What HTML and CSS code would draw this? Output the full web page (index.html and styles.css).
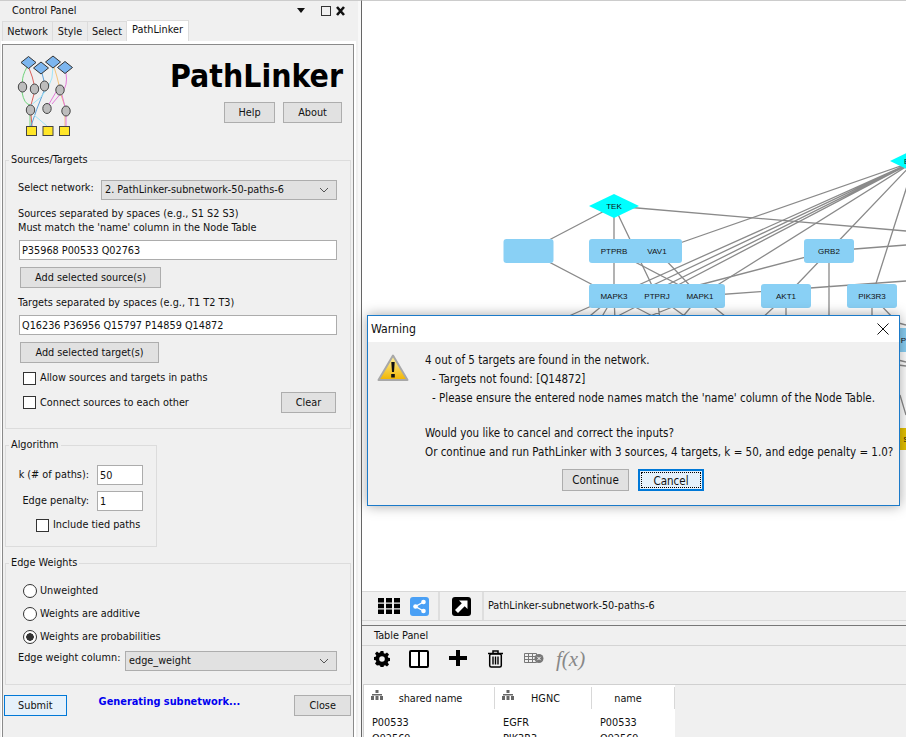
FILE: index.html
```html
<!DOCTYPE html>
<html lang="en">
<head>
<meta charset="utf-8">
<title>PathLinker</title>
<link rel="stylesheet" href="styles.css">
</head>
<body>
<aside class="control">
  <div class="panel-title">
    <span class="panel-name">Control Panel</span>
    <svg class="panel-icons" width="52" height="12" viewBox="0 0 52 12"><path d="M0 3h8L4 8z" fill="#111"/><rect x="24.500" y="1.500" width="9" height="9" fill="none" stroke="#333"/><path d="M40 2l7 8M47 2l-7 8" stroke="#111" stroke-width="2.600"/></svg>
  </div>
  <nav class="tabs">
    <span class="tab tab-network">Network</span>
    <span class="tab tab-style">Style</span>
    <span class="tab tab-select">Select</span>
    <span class="tab tab-active">PathLinker</span>
  </nav>
  <div class="tab-frame">
    <div class="tab-inner">
      <header class="pl-header">
        <svg class="pl-logo" width="60" height="90" viewBox="14 50 60 90">
          <g fill="none" stroke-width="1">
            <path d="M27 67Q22 76 22.500 82" stroke="#6fd37a"/>
            <path d="M22 92Q24 104 30 105" stroke="#6fd37a"/>
            <path d="M30 115V126" stroke="#6fd37a"/>
            <path d="M29 68Q33 78 34 84" stroke="#d9605c"/>
            <path d="M34 94L31 105M31 115L32 126" stroke="#d9605c"/>
            <path d="M42 73L44 81" stroke="#5c9fd8"/>
            <path d="M44 91Q36 110 31 126" stroke="#5c9fd8"/>
            <path d="M53 67Q54 90 30 106M34 115L47 126" stroke="#9fe4f6"/>
            <path d="M54 67Q57 76 59 85" stroke="#f5c47a"/>
            <path d="M61 95L64.500 105M65 116V126" stroke="#f5c47a"/>
            <path d="M66 73Q68 86 62 92L52 104" stroke="#e27ad8"/>
            <path d="M56 92L49 104M62 95L65 107M66 116V126" stroke="#e27ad8"/>
          </g>
          <g fill="#7db6ef" stroke="#333">
            <path d="M28.500 56.500L36 62.500L28.500 68.500L21 62.500Z"/>
            <path d="M41 62L48.500 68L41 74L33.500 68Z"/>
            <path d="M53 56L60.500 62L53 68L45.500 62Z"/>
            <path d="M65 61.500L72.500 67.500L65 73.500L57.500 67.500Z"/>
          </g>
          <g fill="#bdbdbd" stroke="#444">
            <ellipse cx="22.500" cy="87" rx="4.200" ry="5"/>
            <ellipse cx="34.500" cy="89" rx="4.200" ry="5"/>
            <ellipse cx="44.500" cy="86" rx="4.200" ry="5"/>
            <ellipse cx="60" cy="90" rx="4.200" ry="5"/>
            <ellipse cx="30.500" cy="110" rx="4.200" ry="5"/>
            <ellipse cx="47" cy="108.500" rx="4.200" ry="5"/>
            <ellipse cx="66" cy="111" rx="4.200" ry="5"/>
          </g>
          <g fill="#ffe629" stroke="#444">
            <rect x="26.500" y="126.500" width="10" height="9"/>
            <rect x="43" y="126.500" width="10" height="9"/>
            <rect x="59.500" y="126.500" width="10" height="9"/>
          </g>
        </svg>
        <div class="pl-brand">
          <h1 class="pl-title">PathLinker</h1>
          <div class="pl-actions">
            <button class="btn btn-help">Help</button>
            <button class="btn btn-about">About</button>
          </div>
        </div>
      </header>

      <fieldset class="group group-sources">
        <legend>Sources/Targets</legend>
        <div class="row-network">
          <span class="lbl-network">Select network:</span>
          <div class="combo combo-network"><span>2. PathLinker-subnetwork-50-paths-6</span><svg width="10" height="6" viewBox="0 0 10 6"><path d="M1 1l4 4 4-4" fill="none" stroke="#555"/></svg></div>
        </div>
        <p class="hint hint-sources">Sources separated by spaces (e.g., S1 S2 S3)<br>Must match the 'name' column in the Node Table</p>
        <input class="field field-wide" type="text" value="P35968 P00533 Q02763">
        <button class="btn btn-add-source">Add selected source(s)</button>
        <p class="hint hint-targets">Targets separated by spaces (e.g., T1 T2 T3)</p>
        <input class="field field-wide" type="text" value="Q16236 P36956 Q15797 P14859 Q14872">
        <button class="btn btn-add-target">Add selected target(s)</button>
        <label class="check check-allow"><input type="checkbox"><span>Allow sources and targets in paths</span></label>
        <div class="row-connect">
          <label class="check"><input type="checkbox"><span>Connect sources to each other</span></label>
          <button class="btn btn-clear">Clear</button>
        </div>
      </fieldset>

      <fieldset class="group group-algorithm">
        <legend>Algorithm</legend>
        <div class="alg-row alg-first"><span class="alg-label">k (# of paths):</span><input class="field field-small" type="text" value="50"></div>
        <div class="alg-row alg-second"><span class="alg-label">Edge penalty:</span><input class="field field-small" type="text" value="1"></div>
        <label class="check check-tied"><input type="checkbox"><span>Include tied paths</span></label>
      </fieldset>

      <fieldset class="group group-weights">
        <legend>Edge Weights</legend>
        <label class="radio radio-first"><input type="radio" name="w"><span>Unweighted</span></label>
        <label class="radio"><input type="radio" name="w"><span>Weights are additive</span></label>
        <label class="radio"><input type="radio" name="w" checked><span>Weights are probabilities</span></label>
        <div class="row-column">
          <span class="lbl-column">Edge weight column:</span>
          <div class="combo combo-column"><span>edge_weight</span><svg width="10" height="6" viewBox="0 0 10 6"><path d="M1 1l4 4 4-4" fill="none" stroke="#555"/></svg></div>
        </div>
      </fieldset>

      <div class="pl-footer">
        <button class="btn btn-submit">Submit</button>
        <span class="status">Generating subnetwork...</span>
        <button class="btn btn-close">Close</button>
      </div>
    </div>
  </div>
</aside>

<main class="workspace">
  <div class="canvas">
    <svg width="544" height="590" viewBox="362 1 544 590">
      <g stroke="#8a8a8a" stroke-width="1.300" fill="none">
        <path d="M528 251L614 206M614 206V296M614 206L657 296M614 206L906 231"/>
        <path d="M528 251L614 296M657 251L700 296M614 251L700 296"/>
        <path d="M915 161L657 251M915 161L614 296M915 161L630 296M915 161L645 296M915 161L657 296M915 161L700 296M915 161L829 251M915 161L872 296"/>
        <path d="M829 251L657 296M829 251L786 296M829 251V320M829 251L906 245M700 296L906 281"/>
        <path d="M614 296L560 320M614 296L585 320M614 296L600 320M614 296L615 320M614 296L660 320M657 296L610 320M657 296L660 320M657 296L690 320M700 296L640 320M700 296L680 320M700 296L730 320M786 296L760 320M786 296V320M872 296V320M872 296L895 320"/>
        <path d="M880 318L906 325M898 360L906 362M898 365L906 366M900 395L906 415"/>
      </g>
      <g fill="#00ffff">
        <path d="M589 206L614 194L639 206L614 218Z"/>
        <path d="M890 161L915 149L940 161L915 173Z"/>
      </g>
      <g fill="#89d0f5">
        <rect x="503.500" y="239" width="50" height="24" rx="3"/>
        <rect x="589" y="239" width="50" height="24" rx="3"/>
        <rect x="632" y="239" width="50" height="24" rx="3"/>
        <rect x="804" y="239" width="50" height="24" rx="3"/>
        <rect x="589" y="284" width="50" height="24" rx="3"/>
        <rect x="632" y="284" width="50" height="24" rx="3"/>
        <rect x="675" y="284" width="50" height="24" rx="3"/>
        <rect x="761" y="284" width="50" height="24" rx="3"/>
        <rect x="847" y="284" width="50" height="24" rx="3"/>
        <rect x="890" y="328" width="50" height="24" rx="3"/>
      </g>
      <rect x="890" y="428" width="50" height="22" rx="3" fill="#e6c200"/>
      <g class="node-text" text-anchor="middle">
        <text x="614" y="209">TEK</text>
        <text x="915" y="164">EGFR</text>
        <text x="614" y="254">PTPRB</text>
        <text x="657" y="254">VAV1</text>
        <text x="829" y="254">GRB2</text>
        <text x="614" y="299">MAPK3</text>
        <text x="657" y="299">PTPRJ</text>
        <text x="700" y="299">MAPK1</text>
        <text x="786" y="299">AKT1</text>
        <text x="872" y="299">PIK3R3</text>
        <text x="915" y="343">PIK3CA</text>
        <text x="915" y="442">SIRPA</text>
      </g>
    </svg>
  </div>

  <div class="view-bar">
    <div class="view-cell view-cell-a">
      <svg width="22" height="16" viewBox="0 0 22 16" fill="#000"><rect width="6" height="4.500"/><rect x="8" width="6" height="4.500"/><rect x="16" width="6" height="4.500"/><rect y="5.750" width="6" height="4.500"/><rect x="8" y="5.750" width="6" height="4.500"/><rect x="16" y="5.750" width="6" height="4.500"/><rect y="11.500" width="6" height="4.500"/><rect x="8" y="11.500" width="6" height="4.500"/><rect x="16" y="11.500" width="6" height="4.500"/></svg>
      <svg width="19" height="19" viewBox="0 0 19 19"><rect width="19" height="19" rx="3" fill="#4aa0f5"/><g fill="#fff"><circle cx="13.500" cy="5" r="2.300"/><circle cx="5.500" cy="9.500" r="2.300"/><circle cx="13.500" cy="14" r="2.300"/></g><path d="M13.500 5L5.500 9.500L13.500 14" stroke="#fff" stroke-width="1.400" fill="none"/></svg>
    </div>
    <div class="view-cell view-cell-b">
      <svg width="19" height="19" viewBox="0 0 19 19"><rect width="19" height="19" rx="3" fill="#000"/><path d="M7 3.500h8.500V12l-2.800-2.800L6 16l-3-3 6.800-6.700z" fill="#fff"/></svg>
    </div>
    <div class="view-name">PathLinker-subnetwork-50-paths-6</div>
  </div>

  <section class="table-panel">
    <div class="table-title">Table Panel</div>
    <div class="table-tools">
      <svg class="tool-gear" width="16" height="16" viewBox="0 0 16 16"><path fill-rule="evenodd" d="M6.600 0h2.800l.4 2.200 1.300.6L13 1.500l2 2-1.300 1.900.6 1.300 2.200.4v2.800l-2.200.4-.6 1.300 1.300 1.900-2 2-1.900-1.300-1.300.6-.4 2.200H6.600l-.4-2.200-1.300-.6L3 14.500l-2-2 1.300-1.900-.6-1.300L-.5 9 -.5 6.200l2.200-.4.6-1.300L1 2.600l2-2 1.900 1.300 1.300-.6zM8 5.200a2.800 2.800 0 1 0 0 5.600 2.800 2.800 0 0 0 0-5.600z" fill="#000"/></svg>
      <svg class="tool-columns" width="20" height="18" viewBox="0 0 20 18"><rect x="1" y="1" width="18" height="16" rx="1" fill="#fff" stroke="#000" stroke-width="2"/><path d="M10 1v16" stroke="#000" stroke-width="2"/></svg>
      <svg class="tool-plus" width="18" height="16" viewBox="0 0 18 16"><path d="M7 0h4v6h7v4h-7v6H7v-6H0V6h7z" fill="#000"/></svg>
      <svg class="tool-trash" width="17" height="18" viewBox="0 0 17 18"><path d="M1 3.500h15M6 3.500V1h5v2.500" fill="none" stroke="#000" stroke-width="1.500"/><rect x="2.700" y="4" width="11.600" height="13" rx="1.500" fill="none" stroke="#000" stroke-width="1.500"/><path d="M6 6.500v8M8.500 6.500v8M11 6.500v8" stroke="#000" stroke-width="1.400"/></svg>
      <svg class="tool-delcol" width="20" height="11" viewBox="0 0 20 11"><path d="M.5.500h12v9H.5zM.5 3.500h12M.5 6.500h12M4.500.500v9M8.500.500v9" fill="none" stroke="#777"/><circle cx="15" cy="5.500" r="4.500" fill="#777"/><path d="M13.300 3.800l3.400 3.400M16.700 3.800l-3.400 3.400" stroke="#fff"/></svg>
      <span class="tool-fx">f(x)</span>
    </div>
    <div class="table-wrap">
      <div class="table-grid">
        <div class="th th-shared"><svg width="12" height="10" viewBox="0 0 12 10"><path d="M4.500 0h3v3h-3zM0 6h3v4H0zM4.500 6h3v4h-3zM9 6h3v4H9zM1 4h10v1.500H1z" fill="#666"/></svg><span>shared name</span></div>
        <div class="th th-hgnc"><svg width="12" height="10" viewBox="0 0 12 10"><path d="M4.500 0h3v3h-3zM0 6h3v4H0zM4.500 6h3v4h-3zM9 6h3v4H9zM1 4h10v1.500H1z" fill="#666"/></svg><span>HGNC</span></div>
        <div class="th th-name"><span>name</span></div>
        <div class="td">P00533</div><div class="td">EGFR</div><div class="td">P00533</div>
        <div class="td">Q92569</div><div class="td">PIK3R3</div><div class="td">Q92569</div>
      </div>
    </div>
  </section>
</main>

<div class="dialog" role="dialog">
  <div class="dialog-title">
    <span>Warning</span>
    <svg width="12" height="12" viewBox="0 0 12 12"><path d="M.5.500l11 11M11.500.500l-11 11" stroke="#111" fill="none"/></svg>
  </div>
  <div class="dialog-body">
    <svg class="warn-icon" width="32" height="28" viewBox="0 0 32 28">
      <defs><linearGradient id="warnfill" x1="0" y1="0" x2="0" y2="1"><stop offset="0" stop-color="#fff2a0"/><stop offset="1" stop-color="#f0b400"/></linearGradient></defs>
      <path d="M16 1.500L30.500 26H1.500Z" fill="url(#warnfill)" stroke="#a8a8a8" stroke-width="2" stroke-linejoin="round"/>
      <path d="M14.300 8h3.400l-.7 10h-2zM14.200 20h3.600v3.600h-3.600z" fill="#111"/>
    </svg>
    <div class="dialog-text">
      <p>4 out of 5 targets are found in the network.</p>
      <p class="indent">- Targets not found: [Q14872]</p>
      <p class="indent">- Please ensure the entered node names match the 'name' column of the Node Table.</p>
      <p class="spaced">Would you like to cancel and correct the inputs?</p>
      <p>Or continue and run PathLinker with 3 sources, 4 targets, k = 50, and edge penalty = 1.0?</p>
    </div>
  </div>
  <div class="dialog-actions">
    <button class="btn btn-continue">Continue</button>
    <button class="btn btn-cancel"><span>Cancel</span></button>
  </div>
</div>
</body>
</html>
```
FILE: styles.css
```css
* { box-sizing: border-box; }
html, body { margin: 0; padding: 0; }
body {
  position: relative;
  width: 906px;
  height: 737px;
  overflow: hidden;
  display: flex;
  background: #f0f0f0;
  color: #111;
  font-family: "DejaVu Sans", "Noto Sans", sans-serif;
  font-stretch: condensed;
  font-size: 10.8px;
  line-height: 14px;
}
p { margin: 0; }
button, input { font: inherit; color: inherit; margin: 0; }

.control { width: 362px; flex: none; height: 737px; border-right: 1px solid #666; border-top: 1px solid #ccc; box-shadow: inset -3px 0 0 #f8f8f8; }
.panel-title { height: 19px; display: flex; align-items: center; justify-content: space-between; padding: 0 12px 0 12px; }
.tabs { height: 21px; display: flex; padding-left: 2px; align-items: flex-end; }
.tab { height: 20px; line-height: 20px; text-align: center; background: #ececec; border: 1px solid #dcdcdc; border-bottom: 0; border-left: 0; }
.tab-network { width: 51px; border-left: 1px solid #dcdcdc; }
.tab-style { width: 35px; }
.tab-select { width: 39px; }
.tab-active { width: 62px; height: 21px; line-height: 17px; background: #fff; border-color: #dcdcdc; }

.tab-frame { margin: 0 5px 0 1px; height: 696px; border-top: 3px solid #fff; border-left: 1px solid #fff; border-right: 2px solid #fff; }
.tab-inner { height: 100%; border: 1px solid #8a8a8a; border-bottom: 0; padding: 0 2px; }

.pl-header { height: 108px; display: flex; justify-content: space-between; padding-right: 9px; }
.pl-logo { margin: 5px 0 0 9px; }
.pl-brand { display: flex; flex-direction: column; align-items: flex-end; }
.pl-title { margin: 9px -1px 4px 0; height: 44px; line-height: 44px; font-size: 31.7px; font-weight: 700; color: #000; }
.pl-actions { display: flex; gap: 8px; }

.btn { height: 21px; padding: 0; background: #e1e1e1; border: 1px solid #adadad; text-align: center; }
.btn-help { width: 51px; }
.btn-about { width: 59px; }

.group { margin: 0; padding: 0; border: 1px solid #dcdcdc; min-width: 0; }
.group legend { margin-left: 3px; padding: 0 2px; height: 14px; line-height: 14px; }

.group-sources { height: 276px; padding: 13px 0 0 12px; }
.group-sources legend { margin-left: -9px; }
.row-network { display: flex; align-items: center; justify-content: space-between; height: 20px; padding-right: 13px; }
.lbl-network { padding-bottom: 5px; }
.combo { height: 20px; background: #e1e1e1; border: 1px solid #adadad; display: flex; align-items: center; justify-content: space-between; padding: 0 7px 0 3px; }
.combo-network { width: 236px; }
.hint-sources { margin-top: 7px; }
.field { display: block; height: 20px; background: #fff; border: 1px solid #acacac; padding: 0 2px; outline: 0; }
.field-wide { width: 318px; margin-left: 1px; margin-top: 5px; }
.btn-add-source { display: block; width: 141px; margin: 7px 0 0 2px; }
.hint-targets { margin-top: 8px; }
.btn-add-target { display: block; width: 139px; margin: 7px 0 0 2px; }

.check, .radio { display: flex; align-items: center; gap: 4px; height: 14px; }
.check input { appearance: none; width: 13px; height: 13px; margin: 0; background: #fff; border: 1px solid #333; flex: none; }
.check-allow { margin: 8px 0 0 5px; }
.row-connect { display: flex; align-items: center; justify-content: space-between; margin: 7px 0 0 5px; height: 21px; padding-right: 14px; }
.btn-clear { width: 55px; flex: none; }

.group-algorithm { width: 152px; height: 109px; margin-top: 9px; }
.alg-row { display: flex; align-items: center; gap: 8px; height: 20px; }
.alg-first { margin-top: 13px; }
.alg-second { margin-top: 6px; }
.alg-label { width: 83px; text-align: right; }
.field-small { width: 46px; }
.check-tied { margin: 7px 0 0 30px; }

.group-weights { height: 129px; margin-top: 9px; padding-left: 17px; }
.group-weights legend { margin-left: -14px; }
.radio input { appearance: none; width: 14px; height: 14px; margin: 0; background: #fff; border: 1px solid #333; border-radius: 50%; flex: none; }
.radio input:checked { background: radial-gradient(circle, #333 0 3.500px, #fff 4px); }
.radio { height: 14px; margin-top: 9px; gap: 3px; }
.radio-first { margin-top: 14px; }
.row-column { display: flex; align-items: center; height: 20px; margin: 7px 0 0 -5px; white-space: nowrap; }
.lbl-column { width: 107px; padding-bottom: 6px; }
.combo-column { width: 212px; }

.pl-footer { display: flex; align-items: flex-start; margin: 10px 0 0 -1px; height: 21px; }
.btn-submit { width: 63px; background: #e5f1fb; border-color: #0078d7; }
.status { width: 229px; padding: 0 0 0 32px; color: #0000f0; font-weight: 700; font-size: 10.9px; height: 14px; line-height: 14px; white-space: nowrap; }
.btn-close { width: 57px; }

.workspace { flex: 1; height: 737px; display: flex; flex-direction: column; min-width: 0; }
.canvas { height: 591px; flex: none; background: #fff; border-top: 1px solid #ccc; overflow: hidden; }
.canvas svg { display: block; }
.node-text { font-family: "Liberation Sans", sans-serif; font-stretch: normal; font-size: 8px; fill: #111; }

.view-bar { height: 30px; display: flex; border-top: 1px solid #d8d8d8; border-bottom: 1px solid #d8d8d8; flex: none; }
.view-cell { display: flex; align-items: center; border-right: 2px solid #dedede; }
.view-cell-a { width: 78px; padding-left: 16px; gap: 10px; }
.view-cell-b { width: 44px; padding-left: 12px; }
.view-name { padding-left: 4px; line-height: 28px; }

.table-panel { flex: 1; margin-top: 4px; border-top: 1px solid #777; display: flex; flex-direction: column; min-height: 0; }
.table-title { height: 20px; line-height: 19px; padding-left: 12px; border-bottom: 1px solid #d4d4d4; flex: none; }
.table-tools { height: 38px; flex: none; display: flex; align-items: flex-start; padding: 4px 0 0 12px; }
.tool-gear { margin-top: 1px; }
.tool-columns { margin-left: 19px; }
.tool-plus { margin-left: 20px; }
.tool-trash { margin-left: 20px; }
.tool-delcol { margin: 3px 0 0 20px; }
.tool-fx { margin: -4px 0 0 12px; font-family: "Liberation Serif", serif; font-stretch: normal; font-style: italic; font-size: 21px; line-height: 26px; color: #888; }
.table-wrap { flex: 1; min-height: 0; overflow: hidden; margin-left: 1px; border-top: 1px solid #d0d0d0; border-left: 1px solid #d0d0d0; }
.table-grid { width: 311px; background: #fff; display: grid; grid-template-columns: 131px 97px 83px; align-content: start; padding-top: 2px; height: 60px; }
.th { height: 22px; display: flex; align-items: center; border-right: 1px solid #d8d8d8; }
.th svg { margin-left: 7px; margin-bottom: 6px; flex: none; }
.th span { flex: 1; text-align: center; padding-top: 1px; }
.th-shared span { padding-right: 16px; }
.th-hgnc span { padding-right: 14px; }
.th-name span { padding-right: 10px; }
.td { padding: 7px 0 0 8px; height: 16px; }

.dialog { position: absolute; left: 367px; top: 315px; width: 533px; height: 191px; background: #f0f0f0; border: 1px solid #1b7ac9; box-shadow: 0 0 12px rgba(0,0,0,.35); display: flex; flex-direction: column; font-size: 11.5px; }
.dialog-title { height: 26px; background: #fff; display: flex; align-items: center; justify-content: space-between; padding: 0 10px 0 3px; flex: none; font-size: 12.2px; }
.dialog-body { display: flex; padding: 9px 0 0 9px; }
.warn-icon { margin-top: 3px; flex: none; }
.dialog-text { margin-left: 16px; line-height: 19px; white-space: nowrap; }
.indent { padding-left: 7px; }
.spaced { margin-top: 16px; }
.dialog-actions { display: flex; gap: 9px; padding: 7px 0 0 194px; }
.btn-continue { width: 67px; height: 22px; }
.btn-cancel { width: 66px; height: 22px; background: #e5f1fb; border: 2px solid #0078d7; padding: 1px; }
.btn-cancel span { display: block; height: 100%; line-height: 16px; border: 1px dotted #000; }
```
